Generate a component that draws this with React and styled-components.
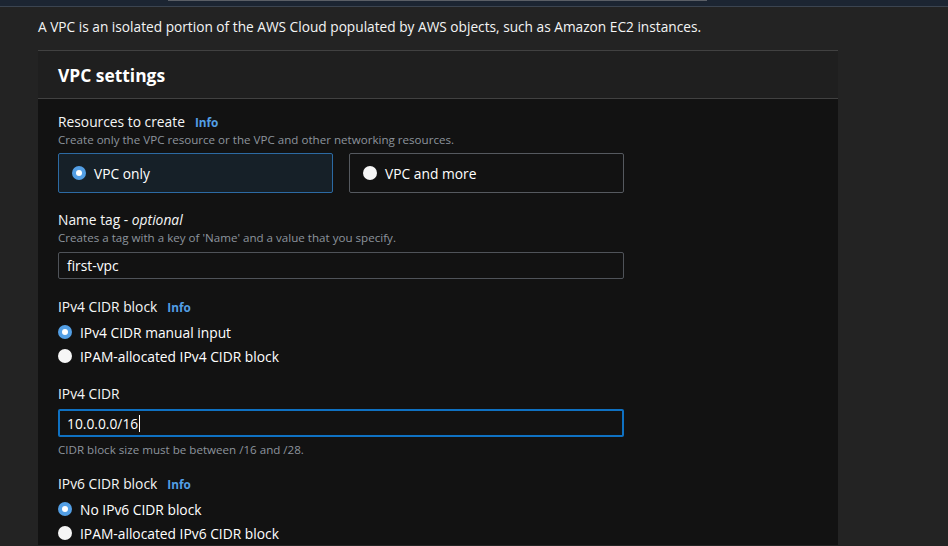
import React from 'react';
import styled, { createGlobalStyle } from 'styled-components';

const GlobalStyle = createGlobalStyle`
  html, body {
    margin: 0;
    padding: 0;
    background: #232323;
  }
  body {
    font-family: 'Open Sans', 'Noto Sans', sans-serif;
    color: #f2f3f3;
    -webkit-font-smoothing: antialiased;
  }
`;

const Page = styled.div`
  width: 948px;
  height: 546px;
  overflow: hidden;
  background: #232323;
`;

const TopStrip = styled.div`
  height: 6px;
  background: #1c2532;
  border-bottom: 1px solid #3b4450;
`;

const StripEdge = styled.div`
  margin-left: 168px;
  width: 539px;
  height: 1px;
  background: #5b5f66;
`;

const Intro = styled.p`
  margin: 10px 0 0 38px;
  font-size: 13.7px;
  line-height: 20px;
  font-weight: 500;
  color: #f4f5f5;
`;

const Panel = styled.section`
  margin: 13px 0 0 38px;
  width: 800px;
  border-top: 1px solid #414141;
  background: #121212;
`;

const PanelHeader = styled.header`
  height: 47px;
  display: flex;
  align-items: center;
  padding: 0 20px;
  background: #1f1f1f;
  border-bottom: 1px solid #414141;
`;

const PanelTitle = styled.h2`
  margin: 0;
  font-size: 17.4px;
  font-weight: 700;
  color: #ffffff;
`;

const PanelBody = styled.div`
  padding: 13px 20px 0;
`;

const Field = styled.div`
  display: flex;
  flex-direction: column;
  margin-top: ${(p) => p.$gap || 0}px;
`;

const Label = styled.div`
  display: flex;
  align-items: center;
  gap: 10px;
  font-size: 13.8px;
  line-height: 20px;
  font-weight: 500;
  color: #f5f6f6;

  em {
    font-weight: 400;
  }
`;

const Info = styled.span`
  font-size: 11.8px;
  font-weight: 700;
  color: #539fe5;
`;

const Hint = styled.div`
  font-size: 11.6px;
  line-height: 16px;
  color: #8d949d;
  margin-top: ${(p) => p.$top || 0}px;
`;

const TileRow = styled.div`
  display: flex;
  gap: 16px;
  margin-top: 5px;
  width: 566px;
`;

const Tile = styled.div`
  flex: 1;
  height: 40px;
  box-sizing: border-box;
  display: flex;
  align-items: center;
  gap: 8px;
  padding-left: 13px;
  border: 1px solid ${(p) => (p.$selected ? '#2c6aa3' : '#55595f')};
  background: ${(p) => (p.$selected ? '#162028' : '#121212')};
  border-radius: 2px;
  font-size: 13.8px;
  font-weight: 500;
  color: #ffffff;
`;

const Radio = styled.span`
  width: 14px;
  height: 14px;
  box-sizing: border-box;
  border-radius: 50%;
  flex-shrink: 0;
  background: ${(p) => (p.$checked ? '#539fe5' : '#f6f6f6')};
  position: relative;

  &::after {
    content: '';
    display: ${(p) => (p.$checked ? 'block' : 'none')};
    position: absolute;
    left: 4px;
    top: 4px;
    width: 6px;
    height: 6px;
    border-radius: 50%;
    background: #ffffff;
  }
`;

const RadioGroup = styled.div`
  display: flex;
  flex-direction: column;
  margin-top: 3px;
`;

const RadioRow = styled.div`
  height: 24px;
  display: flex;
  align-items: center;
  gap: 8px;
  font-size: 13.8px;
  font-weight: 500;
  color: #ffffff;
`;

const TextBox = styled.div`
  width: 566px;
  box-sizing: border-box;
  height: ${(p) => (p.$focused ? 28 : 27)}px;
  margin-top: ${(p) => p.$top || 0}px;
  display: flex;
  align-items: center;
  padding-left: ${(p) => (p.$focused ? 7 : 8)}px;
  border: ${(p) => (p.$focused ? '2px solid #0f71c2' : '1px solid #4f5359')};
  border-radius: 2px;
  background: #121212;
  font-size: 13.8px;
  font-weight: 500;
  color: #ffffff;
`;

const Caret = styled.span`
  display: inline-block;
  width: 1px;
  height: 17px;
  margin-left: 1px;
  background: #ffffff;
`;

const Choice = ({ checked, children }) => (
  <RadioRow>
    <Radio $checked={checked} />
    {children}
  </RadioRow>
);

export default function App() {
  return (
    <>
      <GlobalStyle />
      <Page>
        <TopStrip>
          <StripEdge />
        </TopStrip>
        <Intro>
          A VPC is an isolated portion of the AWS Cloud populated by AWS objects, such as Amazon EC2 instances.
        </Intro>
        <Panel>
          <PanelHeader>
            <PanelTitle>VPC settings</PanelTitle>
          </PanelHeader>
          <PanelBody>
            <Field>
              <Label>
                Resources to create <Info>Info</Info>
              </Label>
              <Hint>Create only the VPC resource or the VPC and other networking resources.</Hint>
              <TileRow>
                <Tile $selected>
                  <Radio $checked />
                  VPC only
                </Tile>
                <Tile>
                  <Radio />
                  VPC and more
                </Tile>
              </TileRow>
            </Field>

            <Field $gap={17}>
              <Label>
                <span>
                  Name tag - <em>optional</em>
                </span>
              </Label>
              <Hint>Creates a tag with a key of 'Name' and a value that you specify.</Hint>
              <TextBox $top={6}>first-vpc</TextBox>
            </Field>

            <Field $gap={18}>
              <Label>
                IPv4 CIDR block <Info>Info</Info>
              </Label>
              <RadioGroup>
                <Choice checked>IPv4 CIDR manual input</Choice>
                <Choice>IPAM-allocated IPv4 CIDR block</Choice>
              </RadioGroup>
            </Field>

            <Field $gap={16}>
              <Label>IPv4 CIDR</Label>
              <TextBox $focused $top={5}>
                10.0.0.0/16
                <Caret />
              </TextBox>
              <Hint $top={5}>CIDR block size must be between /16 and /28.</Hint>
            </Field>

            <Field $gap={16}>
              <Label>
                IPv6 CIDR block <Info>Info</Info>
              </Label>
              <RadioGroup>
                <Choice checked>No IPv6 CIDR block</Choice>
                <Choice>IPAM-allocated IPv6 CIDR block</Choice>
              </RadioGroup>
            </Field>
          </PanelBody>
        </Panel>
      </Page>
    </>
  );
}
